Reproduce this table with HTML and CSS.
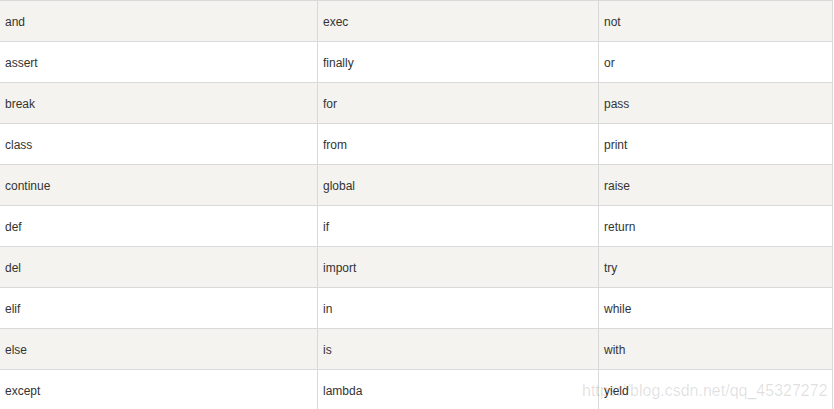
FILE: index.html
```html
<!DOCTYPE html>
<html>
<head>
<meta charset="utf-8">
<link rel="stylesheet" href="styles.css">
</head>
<body>
<div class="table">
  <div class="row shade"><div class="cell">and</div><div class="cell">exec</div><div class="cell">not</div></div>
  <div class="row"><div class="cell">assert</div><div class="cell">finally</div><div class="cell">or</div></div>
  <div class="row shade"><div class="cell">break</div><div class="cell">for</div><div class="cell">pass</div></div>
  <div class="row"><div class="cell">class</div><div class="cell">from</div><div class="cell">print</div></div>
  <div class="row shade"><div class="cell">continue</div><div class="cell">global</div><div class="cell">raise</div></div>
  <div class="row"><div class="cell">def</div><div class="cell">if</div><div class="cell">return</div></div>
  <div class="row shade"><div class="cell">del</div><div class="cell">import</div><div class="cell">try</div></div>
  <div class="row"><div class="cell">elif</div><div class="cell">in</div><div class="cell">while</div></div>
  <div class="row shade"><div class="cell">else</div><div class="cell">is</div><div class="cell">with</div></div>
  <div class="row"><div class="cell">except</div><div class="cell">lambda</div><div class="cell">yield</div></div>
</div>
<div class="watermark">https://blog.csdn.net/qq_45327272</div>
</body>
</html>
```
FILE: styles.css
```css
html, body {
  margin: 0;
  padding: 0;
  background: #fff;
  overflow: hidden;
}
body {
  font-family: "Liberation Sans", Arial, sans-serif;
  font-size: 12px;
  color: #333;
  position: relative;
  width: 834px;
  height: 409px;
}
.table {
  width: 833px;
  border-top: 1px solid #d9d9d9;
}
.row {
  display: grid;
  grid-template-columns: 318px 281px 234px;
  height: 41px;
}
.row.shade {
  background: #f4f3ef;
}
.cell {
  box-sizing: border-box;
  border-right: 1px solid #d9d9d9;
  border-bottom: 1px solid #d9d9d9;
  padding: 1px 0 0 5px;
  display: flex;
  align-items: center;
}
.watermark {
  position: absolute;
  left: 582px;
  top: 382px;
  font-family: "Liberation Sans", Arial, sans-serif;
  font-size: 16px;
  color: rgba(0, 0, 0, 0.13);
  white-space: nowrap;
}
```
